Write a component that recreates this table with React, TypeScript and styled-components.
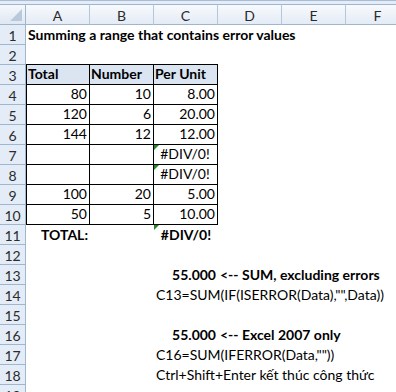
import React from 'react'
import styled, { createGlobalStyle, css } from 'styled-components'

const GlobalStyle = createGlobalStyle`
  html, body {
    margin: 0;
    padding: 0;
    background: #fff;
    overflow: hidden;
  }
  body {
    font-family: Lato, "Liberation Sans", sans-serif;
  }
`

const COL_W = 64
const ROW_H = 20
const HEAD_LINE = '#9eb6ce'

const Sheet = styled.div`
  width: 396px;
  height: 392px;
  overflow: hidden;
  background: #fff;
  display: flex;
  flex-direction: column;
`

const TopStrip = styled.div`
  flex: none;
  height: 3px;
  border-top: 1px solid #a9bcd3;
  background: #e4ecf7;
`

const Grid = styled.div`
  display: grid;
  grid-template-columns: 26px repeat(6, ${COL_W}px);
  grid-template-rows: 21px repeat(19, ${ROW_H}px);
  font-size: 14px;
  color: #000;
`

const headerBase = css`
  box-sizing: border-box;
  display: flex;
  align-items: center;
  justify-content: center;
  color: #2b2b2b;
  font-size: 14px;
`

const Corner = styled.div`
  ${headerBase};
  position: relative;
  grid-row: 1;
  grid-column: 1;
  border-top: 1px solid ${HEAD_LINE};
  border-bottom: 1px solid ${HEAD_LINE};
  border-right: 1px solid ${HEAD_LINE};
  background: linear-gradient(#f5f8fc, #dfe7f2);

  &::after {
    content: '';
    position: absolute;
    right: 3px;
    bottom: 3px;
    width: 0;
    height: 0;
    border-left: 12px solid transparent;
    border-bottom: 12px solid #b9c9dc;
  }
`

const ColHeader = styled.div<{ $col: number }>`
  ${headerBase};
  grid-row: 1;
  grid-column: ${(p) => p.$col + 2};
  border-top: 1px solid ${HEAD_LINE};
  border-bottom: 1px solid ${HEAD_LINE};
  border-right: 1px solid #b4c6da;
  background: linear-gradient(#f7fafd, #e4ebf5);
  padding-top: 1px;
`

const RowHeader = styled.div<{ $row: number }>`
  ${headerBase};
  grid-row: ${(p) => p.$row + 1};
  grid-column: 1;
  border-right: 1px solid ${HEAD_LINE};
  border-bottom: 1px solid ${HEAD_LINE};
  background: #e4ecf7;
  padding-top: 2px;
`

const errorFlag = css`
  &::before {
    content: '';
    position: absolute;
    left: 0;
    top: 0;
    border-top: 5px solid #1e8b1e;
    border-right: 5px solid transparent;
  }
`

const Cell = styled.div<{
  $row: number
  $col: number
  $span?: number
  $align?: 'left' | 'right' | 'center'
  $bold?: boolean
  $flag?: boolean
}>`
  position: relative;
  box-sizing: border-box;
  grid-row: ${(p) => p.$row + 1};
  grid-column: ${(p) => p.$col + 2} / span ${(p) => p.$span ?? 1};
  display: flex;
  align-items: flex-end;
  justify-content: ${(p) =>
    p.$align === 'right' ? 'flex-end' : p.$align === 'center' ? 'center' : 'flex-start'};
  padding: 0 2px 2px;
  white-space: nowrap;
  line-height: 16px;
  font-weight: ${(p) => (p.$bold ? 700 : 400)};
  ${(p) => p.$flag && errorFlag}
`

const Table = styled.div`
  grid-column: 2 / span 3;
  grid-row: 4 / span 8;
  align-self: start;
  margin-top: -1px;
  display: grid;
  grid-template-columns: 63px 64px 64px;
  grid-template-rows: repeat(8, ${ROW_H}px);
  border-top: 1px solid #000;
  border-left: 1px solid #000;
`

const TableCell = styled.div<{
  $head?: boolean
  $align?: 'left' | 'right' | 'center'
  $flag?: boolean
}>`
  position: relative;
  box-sizing: border-box;
  display: flex;
  align-items: flex-end;
  justify-content: ${(p) =>
    p.$align === 'right' ? 'flex-end' : p.$align === 'center' ? 'center' : 'flex-start'};
  padding: 0 2px 2px 1px;
  border-right: 1px solid #000;
  border-bottom: 1px solid #000;
  line-height: 16px;
  white-space: nowrap;
  background: ${(p) => (p.$head ? '#dbe5f1' : '#fff')};
  font-weight: ${(p) => (p.$head ? 700 : 400)};
  ${(p) => p.$flag && errorFlag}
`

const columns = ['A', 'B', 'C', 'D', 'E', 'F']

const rows: [string, string, string][] = [
  ['80', '10', '8.00'],
  ['120', '6', '20.00'],
  ['144', '12', '12.00'],
  ['', '', '#DIV/0!'],
  ['', '', '#DIV/0!'],
  ['100', '20', '5.00'],
  ['50', '5', '10.00'],
]

export default function App() {
  return (
    <Sheet>
      <GlobalStyle />
      <TopStrip />
      <Grid>
        <Corner />
        {columns.map((c, i) => (
          <ColHeader key={c} $col={i}>
            {c}
          </ColHeader>
        ))}
        {Array.from({ length: 19 }, (_, i) => (
          <RowHeader key={i} $row={i + 1}>
            {i + 1}
          </RowHeader>
        ))}

        <Cell $row={1} $col={0} $span={6} $bold>
          Summing a range that contains error values
        </Cell>

        <Table>
          <TableCell $head>Total</TableCell>
          <TableCell $head>Number</TableCell>
          <TableCell $head>Per Unit</TableCell>
          {rows.map((r, i) => {
            const isErr = r[2].startsWith('#')
            return (
              <React.Fragment key={i}>
                <TableCell $align="right">{r[0]}</TableCell>
                <TableCell $align="right">{r[1]}</TableCell>
                <TableCell $align={isErr ? 'center' : 'right'} $flag={isErr}>
                  {r[2]}
                </TableCell>
              </React.Fragment>
            )
          })}
        </Table>

        <Cell $row={11} $col={0} $align="right" $bold>
          TOTAL:
        </Cell>
        <Cell $row={11} $col={2} $align="center" $bold $flag>
          #DIV/0!
        </Cell>

        <Cell $row={13} $col={2} $align="right" $bold>
          55.000
        </Cell>
        <Cell $row={13} $col={3} $span={3} $bold>
          &lt;-- SUM, excluding errors
        </Cell>
        <Cell $row={14} $col={2} $span={4}>
          C13=SUM(IF(ISERROR(Data),"",Data))
        </Cell>

        <Cell $row={16} $col={2} $align="right" $bold>
          55.000
        </Cell>
        <Cell $row={16} $col={3} $span={3} $bold>
          &lt;-- Excel 2007 only
        </Cell>
        <Cell $row={17} $col={2} $span={4}>
          C16=SUM(IFERROR(Data,""))
        </Cell>
        <Cell $row={18} $col={2} $span={4}>
          Ctrl+Shift+Enter kết thúc công thức
        </Cell>
      </Grid>
    </Sheet>
  )
}
